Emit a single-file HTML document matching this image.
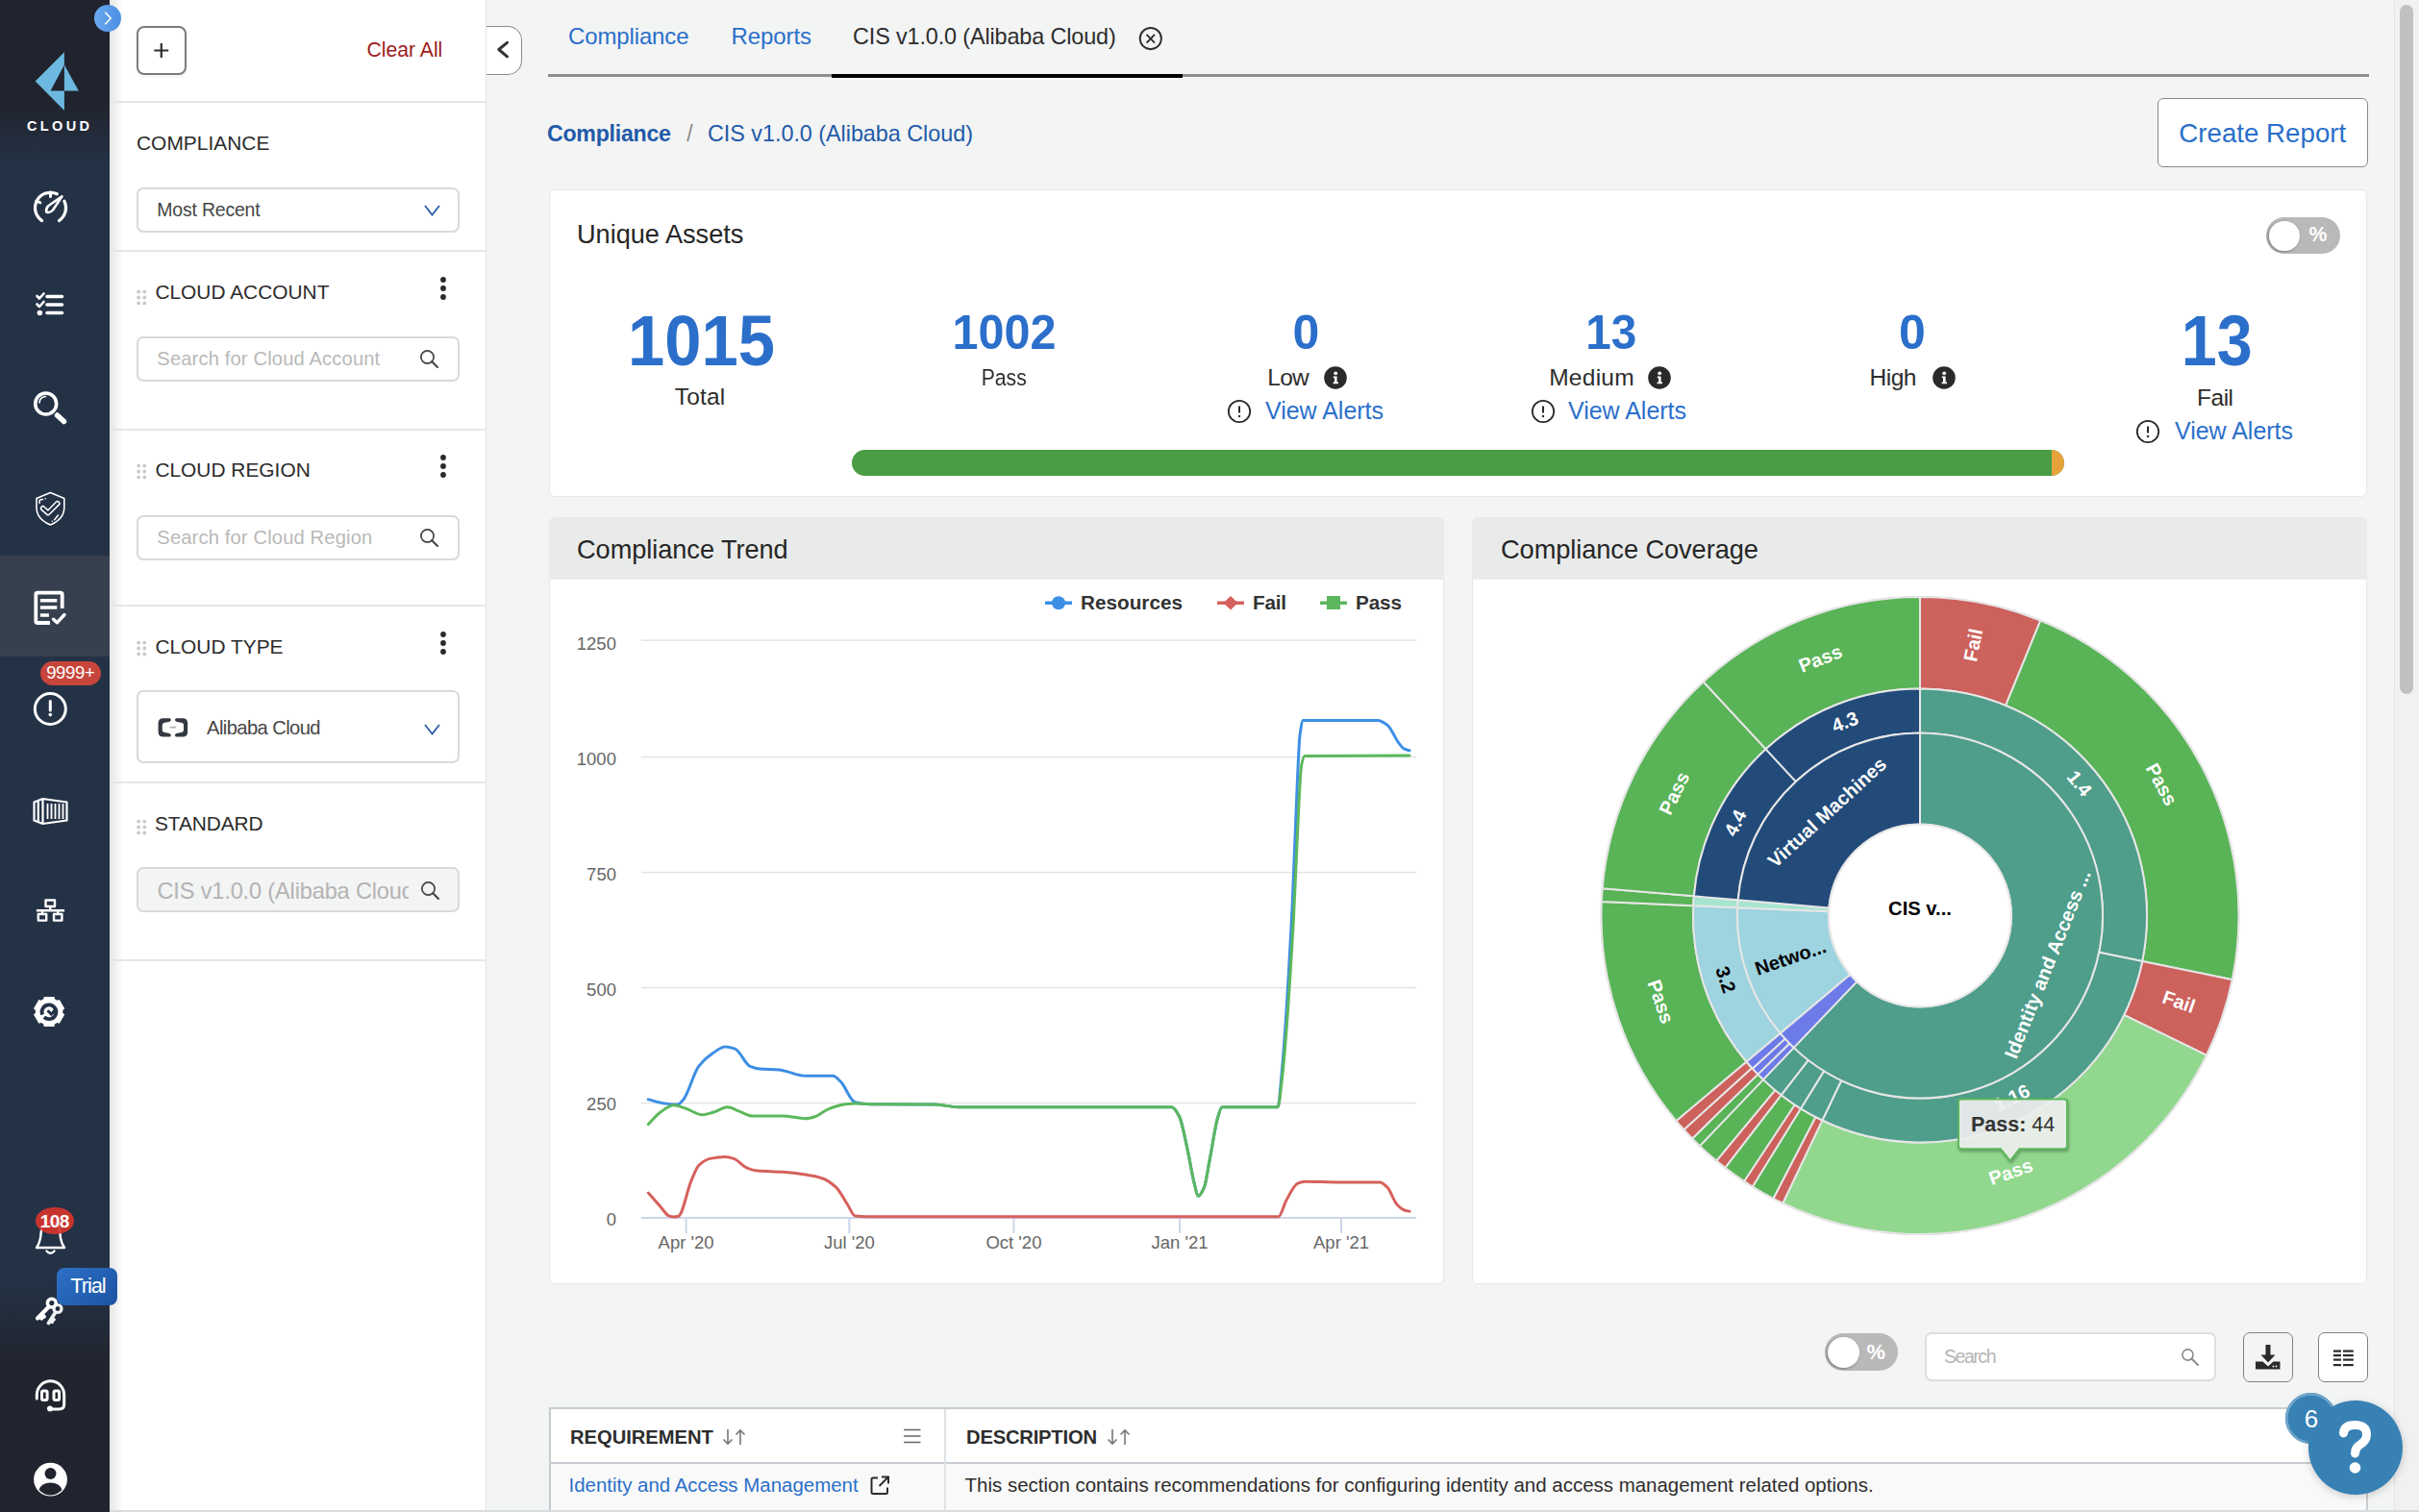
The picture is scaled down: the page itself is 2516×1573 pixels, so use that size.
<!DOCTYPE html>
<html><head><meta charset="utf-8"><style>
html,body{margin:0;padding:0;}
body{width:2516px;height:1573px;position:relative;overflow:hidden;background:#f3f4f4;font-family:"Liberation Sans",sans-serif;}
.b{position:absolute;}
.t{position:absolute;white-space:nowrap;line-height:1;}
</style></head><body>
<div class="b" style="left:0;top:0;width:114px;height:1573px;background:linear-gradient(180deg,#21242e 0px,#21242e 108px,#243246 172px,#243246 1330px,#21252f 1415px,#21242e 1573px);"></div>
<div class="b" style="left:0px;top:578px;width:114px;height:105px;background:#36404f;"></div>
<svg class="b" style="left:0;top:0" width="114" height="150" viewBox="0 0 114 150">
<path d="M66.9 54.2 L36.7 84.4 L66.9 115 Z M66.9 67.4 L52.6 94.5 L66.9 94.5 Z" fill="#6cb8e0" fill-rule="evenodd"/>
<path d="M66.9 67.4 L81.8 94.5 L66.9 94.5 Z" fill="#6cb8e0"/>
</svg>
<div class="t" style="left:28.0px;top:124.4px;font-size:14.5px;color:#fff;font-weight:bold;letter-spacing:3.36px;">CLOUD</div>
<svg class="b" style="left:0;top:0" width="114" height="1573" viewBox="0 0 114 1573">
<g fill="none" stroke="#fff" stroke-linecap="round" stroke-linejoin="round">
 <!-- speedometer -->
 <path d="M43.55 229.56 A16 16 0 0 1 59.26 201.80 M66.88 209.29 A16 16 0 0 1 61.45 229.56" stroke-width="3.2"/>
 <path d="M52.5 200 L52.5 204.5 M37.8 209 L41.8 210.8" stroke-width="3"/>
 <path d="M48.2 220.5 Q47.5 216.5 50.5 214 L64.5 204.3 L55 218.5 Q52 222 48.2 220.5 Z" stroke-width="2.6"/>
 <!-- list -->
 <path d="M38.5 308 L41 310.5 L45.5 305.5 M38.5 316.5 L41 319 L45.5 314" stroke-width="2.6"/>
 <path d="M49 308.5 L64.5 308.5 M49 317 L64.5 317 M49 325.5 L64.5 325.5" stroke-width="3.6"/>
 <circle cx="41.4" cy="325.5" r="1.4" stroke-width="2.8"/>
 <!-- search -->
 <circle cx="47.7" cy="420" r="11" stroke-width="3.6"/>
 <path d="M41 419 A6.5 6.5 0 0 1 47.5 412.5" stroke-width="1.6"/>
 <path d="M59.5 432 L66.5 438.5" stroke-width="5.5"/>
 <!-- shield -->
 <path d="M52.4 512.6 L66.8 518.6 L66.8 528.5 C66.5 536.5 61 542.5 52.4 546 C43.8 542.5 38.3 536.5 38 528.5 L38 518.6 Z" stroke-width="1.6"/>
 <path d="M41.1 523.6 L41.1 520.9 Q41.1 520.2 41.8 520.1 L44.4 519.6 M47.2 518.8 L47.4 518.8" stroke-width="1.5"/>
 <path d="M56.6 540.8 L60.5 536 M54.3 542.3 L54.3 542.3" stroke-width="1.5"/>
 <path d="M44.6 528.8 L50 533.6 L59.8 523.7" stroke-width="5.6"/>
 <path d="M44.6 528.8 L50 533.6 L59.8 523.7" stroke-width="2.6" stroke="#243246"/>
 <!-- report -->
 <path d="M52 648 L39 648 Q37.3 648 37.3 646.3 L37.3 618.3 Q37.3 616.6 39 616.6 L63 616.6 Q64.7 616.6 64.7 618.3 L64.7 633" stroke-width="3.8" stroke-linecap="butt"/>
 <path d="M41.9 624.7 L59.3 624.7 M41.9 632 L59.3 632 M41.9 640 L50.9 640" stroke-width="3.4" stroke-linecap="butt"/>
 <path d="M55.6 644.2 L59.3 647.8 L67 639.5" stroke-width="3.4"/>
 <!-- alert circle -->
 <circle cx="52.3" cy="737.5" r="16" stroke-width="3"/>
 <path d="M52.3 729.5 L52.3 739" stroke-width="3"/>
</g>
<circle cx="52.3" cy="743.6" r="1.8" fill="#fff"/>
<!-- search glint inside ring fill fix -->
<g fill="none" stroke="#fff" stroke-width="2.2" stroke-linejoin="round">
 <!-- container -->
 <path d="M35.5 834.5 L44.5 831 L69.5 834.5 L69.5 853.5 L44.5 857 L35.5 853.5 Z"/>
 <path d="M44.5 831 L44.5 857 M39.8 834 L39.8 854.5"/>
 <path d="M49.5 836 L49.5 852 M53.5 836 L53.5 852 M57.5 836 L57.5 852 M61.5 836 L61.5 852 M65.5 836 L65.5 852" stroke-width="1.8"/>
 <!-- network -->
 <rect x="47.5" y="936.5" width="9.5" height="6.5" stroke-width="2.4"/>
 <path d="M52.3 943 L52.3 947.2 M37.9 947.2 L67.1 947.2 M44 947.2 L44 950 M60.2 947.2 L60.2 950" stroke-width="2.4"/>
 <rect x="39.8" y="951" width="8.4" height="6.6" stroke-width="2.4"/>
 <rect x="56" y="951" width="8.4" height="6.6" stroke-width="2.4"/>
</g>
<!-- gear -->
<g transform="translate(51.1 1052.4)">
 <path fill="#fff" d="M-5.85 -13.05 L-5.34 -15.51 L5.34 -15.51 L5.85 -13.05 L8.37 -11.59 L10.76 -12.38 L16.10 -3.13 L14.23 -1.46 L14.23 1.46 L16.10 3.13 L10.76 12.38 L8.37 11.59 L5.85 13.05 L5.34 15.51 L-5.34 15.51 L-5.85 13.05 L-8.37 11.59 L-10.76 12.38 L-16.10 3.13 L-14.23 1.46 L-14.23 -1.46 L-16.10 -3.13 L-10.76 -12.38 L-8.37 -11.59 Z"/>
 <path d="M-5.2 5.8 A7.4 7.4 0 1 0 -7 3.2" stroke="#243246" stroke-width="3.8" fill="none"/>
 <path d="M-1.6 -1.2 L2.2 2.6 L6.5 -1.8" stroke="#243246" stroke-width="3" fill="none"/>
</g>
<g fill="none" stroke="#fff" stroke-linecap="round" stroke-linejoin="round">
 <!-- bell -->
 <path d="M38 1298 L67 1298 Q64 1294 63 1288 L62 1280 Q61 1272 52.5 1271 Q44 1272 43 1280 L42 1288 Q41 1294 38 1298 Z" stroke-width="2.4"/>
 <path d="M48.5 1301.5 Q52.5 1306 56.5 1301.5" stroke-width="2.4"/>
 <!-- headset -->
 <path d="M38.3 1455 L38.3 1451 A14.2 14.2 0 0 1 66.7 1451 L66.7 1461 Q66.7 1466 61.5 1466 L55 1466" stroke-width="3"/>
 <rect x="43.5" y="1447" width="5.6" height="9.5" rx="1.5" stroke-width="3"/>
 <rect x="56" y="1447" width="5.6" height="9.5" rx="1.5" stroke-width="3"/>
</g>
<circle cx="52" cy="1465.5" r="3" fill="#fff"/>
<!-- key -->
<g fill="none" stroke="#fff" stroke-linecap="round" stroke-linejoin="round">
 <circle cx="60" cy="1361.5" r="4" stroke-width="3.2" stroke="#eef0f2"/>
 <path d="M57.2 1366 L50.5 1376.5 M53.8 1371.5 L56 1372.8 M52.2 1374 L54.2 1375.2" stroke-width="3.8" stroke="#eef0f2"/>
 <circle cx="53.8" cy="1355.6" r="4.4" stroke-width="3.6"/>
 <path d="M50.8 1359.6 L39 1371.5 M43.5 1367.5 L45.8 1369.8 M41.3 1369.6 L43.3 1371.6" stroke-width="4.2"/>
</g>
<!-- user -->
<circle cx="52.5" cy="1539.2" r="17.4" fill="#fff"/>
<circle cx="52.5" cy="1533" r="6" fill="#21242e"/>
<path d="M40.5 1550 Q43 1542.5 52.5 1542.5 Q62 1542.5 64.5 1550 Q59 1555.5 52.5 1555.5 Q46 1555.5 40.5 1550 Z" fill="#21242e"/>
</svg>
<div class="b" style="left:114px;top:0px;width:392px;height:1573px;background:#fff;border-right:1px solid #e2e4e4;box-sizing:border-box;"></div>
<div class="b" style="left:114px;top:0px;width:14px;height:1573px;background:linear-gradient(90deg,rgba(0,0,0,0.10),rgba(0,0,0,0));"></div>
<div class="b" style="left:142px;top:27px;width:51.5px;height:51px;border:2px solid #7b7b7b;border-radius:8px;box-sizing:border-box;box-shadow:0 2px 3px rgba(0,0,0,0.06);"></div>
<svg class="b" style="left:142px;top:27px" width="52" height="52"><path d="M25.8 18 L25.8 33 M18.4 25.5 L33.2 25.5" stroke="#2c2c2c" stroke-width="2.2"/></svg>
<div class="t" style="left:381.6px;top:41.0px;font-size:21.2px;color:#9c1b1b;letter-spacing:-0.02px;">Clear All</div>
<div class="b" style="left:114px;top:104.5px;width:391px;height:2.0px;background:#e6e6e6;"></div>
<div class="t" style="left:142.0px;top:138.5px;font-size:20.9px;color:#2b2b2b;letter-spacing:0.02px;">COMPLIANCE</div>
<div class="b" style="left:142.2px;top:194.5px;width:336.0px;height:47.5px;border:2px solid #d9d9d9;border-radius:7px;box-sizing:border-box;background:#fff;"></div>
<div class="t" style="left:163.3px;top:208.6px;font-size:19.5px;color:#464646;letter-spacing:-0.21px;">Most Recent</div>
<svg class="b" style="left:440.5px;top:212.5px" width="18" height="12"><path d="M1 1 L8.5 10.5 L16 1" stroke="#2a5ca8" stroke-width="1.8" fill="none"/></svg>
<div class="b" style="left:114px;top:260px;width:391px;height:2px;background:#e6e6e6;"></div>
<svg class="b" style="left:142px;top:301.5px" width="12" height="16"><circle cx="2.2" cy="1.6" r="1.9" fill="#c9c9c9"/><circle cx="8.3" cy="1.6" r="1.9" fill="#c9c9c9"/><circle cx="2.2" cy="7.5" r="1.9" fill="#c9c9c9"/><circle cx="8.3" cy="7.5" r="1.9" fill="#c9c9c9"/><circle cx="2.2" cy="13.4" r="1.9" fill="#c9c9c9"/><circle cx="8.3" cy="13.4" r="1.9" fill="#c9c9c9"/></svg>
<div class="t" style="left:161.4px;top:294.2px;font-size:20.9px;color:#2b2b2b;letter-spacing:0.00px;">CLOUD ACCOUNT</div>
<svg class="b" style="left:456.1px;top:285.3px" width="10" height="30"><circle cx="5" cy="6.0" r="2.9" fill="#2a2a2a"/><circle cx="5" cy="15.0" r="2.9" fill="#2a2a2a"/><circle cx="5" cy="24.0" r="2.9" fill="#2a2a2a"/></svg>
<div class="b" style="left:142.2px;top:350px;width:336.0px;height:47.19999999999999px;border:2px solid #d9d9d9;border-radius:7px;box-sizing:border-box;background:#fff;"></div>
<div class="t" style="left:163.3px;top:363.3px;font-size:20.2px;color:#b9b9b9;letter-spacing:0.13px;">Search for Cloud Account</div>
<svg class="b" style="left:434px;top:360.5px" width="26" height="26"><circle cx="10.5" cy="10.5" r="6.6" stroke="#444" stroke-width="1.7" fill="none"/><path d="M15.3 15.3 L21.0 21.0" stroke="#444" stroke-width="2.1" stroke-linecap="round"/></svg>
<div class="b" style="left:114px;top:445.5px;width:391px;height:2.0px;background:#e6e6e6;"></div>
<svg class="b" style="left:142px;top:482.5px" width="12" height="16"><circle cx="2.2" cy="1.6" r="1.9" fill="#c9c9c9"/><circle cx="8.3" cy="1.6" r="1.9" fill="#c9c9c9"/><circle cx="2.2" cy="7.5" r="1.9" fill="#c9c9c9"/><circle cx="8.3" cy="7.5" r="1.9" fill="#c9c9c9"/><circle cx="2.2" cy="13.4" r="1.9" fill="#c9c9c9"/><circle cx="8.3" cy="13.4" r="1.9" fill="#c9c9c9"/></svg>
<div class="t" style="left:161.4px;top:479.3px;font-size:20.9px;color:#2b2b2b;letter-spacing:0.00px;">CLOUD REGION</div>
<svg class="b" style="left:456.1px;top:470.3px" width="10" height="30"><circle cx="5" cy="6.0" r="2.9" fill="#2a2a2a"/><circle cx="5" cy="15.0" r="2.9" fill="#2a2a2a"/><circle cx="5" cy="24.0" r="2.9" fill="#2a2a2a"/></svg>
<div class="b" style="left:142.2px;top:535.6px;width:336.0px;height:47.39999999999998px;border:2px solid #d9d9d9;border-radius:7px;box-sizing:border-box;background:#fff;"></div>
<div class="t" style="left:163.3px;top:548.9px;font-size:20.2px;color:#b9b9b9;letter-spacing:0.13px;">Search for Cloud Region</div>
<svg class="b" style="left:434px;top:546.5px" width="26" height="26"><circle cx="10.5" cy="10.5" r="6.6" stroke="#444" stroke-width="1.7" fill="none"/><path d="M15.3 15.3 L21.0 21.0" stroke="#444" stroke-width="2.1" stroke-linecap="round"/></svg>
<div class="b" style="left:114px;top:628.5px;width:391px;height:2.0px;background:#e6e6e6;"></div>
<svg class="b" style="left:142px;top:666.5px" width="12" height="16"><circle cx="2.2" cy="1.6" r="1.9" fill="#c9c9c9"/><circle cx="8.3" cy="1.6" r="1.9" fill="#c9c9c9"/><circle cx="2.2" cy="7.5" r="1.9" fill="#c9c9c9"/><circle cx="8.3" cy="7.5" r="1.9" fill="#c9c9c9"/><circle cx="2.2" cy="13.4" r="1.9" fill="#c9c9c9"/><circle cx="8.3" cy="13.4" r="1.9" fill="#c9c9c9"/></svg>
<div class="t" style="left:161.4px;top:663.2px;font-size:20.9px;color:#2b2b2b;letter-spacing:0.00px;">CLOUD TYPE</div>
<svg class="b" style="left:456.1px;top:654.3px" width="10" height="30"><circle cx="5" cy="6.0" r="2.9" fill="#2a2a2a"/><circle cx="5" cy="15.0" r="2.9" fill="#2a2a2a"/><circle cx="5" cy="24.0" r="2.9" fill="#2a2a2a"/></svg>
<div class="b" style="left:142.2px;top:718px;width:336.0px;height:76.20000000000005px;border:2px solid #d9d9d9;border-radius:7px;box-sizing:border-box;background:#fff;"></div>
<svg class="b" style="left:0;top:0" width="220" height="800"><path d="M176.3 747.2 L169.9 747.2 Q164.6 747.2 164.6 752.5 L164.6 761.2 Q164.6 766.5 169.9 766.5 L176.3 766.5 Q177.8 766.5 177.8 765 Q177.8 763.3 176.3 763 L170.5 761.7 Q168.8 761.3 168.8 759.6 L168.8 754.1 Q168.8 752.4 170.5 752 L176.3 750.7 Q177.8 750.4 177.8 748.7 Q177.8 747.2 176.3 747.2 Z M 183.5 747.2 L 189.9 747.2 Q 195.2 747.2 195.2 752.5 L 195.2 761.2 Q 195.2 766.5 189.9 766.5 L 183.5 766.5 Q 182.0 766.5 182.0 765.0 Q 182.0 763.3 183.5 763.0 L 189.3 761.7 Q 191.0 761.3 191.0 759.6 L 191.0 754.1 Q 191.0 752.4 189.3 752.0 L 183.5 750.7 Q 182.0 750.4 182.0 748.7 Q 182.0 747.2 183.5 747.2 Z" fill="#343840"/><path d="M177.5 756.7 L182.3 756.7" stroke="#b5b5b5" stroke-width="1.8" stroke-linecap="round"/></svg>
<div class="t" style="left:215.1px;top:746.5px;font-size:20.2px;color:#464646;letter-spacing:-0.60px;">Alibaba Cloud</div>
<svg class="b" style="left:440.5px;top:753px" width="18" height="12"><path d="M1 1 L8.5 10.5 L16 1" stroke="#2a5ca8" stroke-width="1.8" fill="none"/></svg>
<div class="b" style="left:114px;top:812.5px;width:391px;height:2.0px;background:#e6e6e6;"></div>
<svg class="b" style="left:142px;top:853px" width="12" height="16"><circle cx="2.2" cy="1.6" r="1.9" fill="#c9c9c9"/><circle cx="8.3" cy="1.6" r="1.9" fill="#c9c9c9"/><circle cx="2.2" cy="7.5" r="1.9" fill="#c9c9c9"/><circle cx="8.3" cy="7.5" r="1.9" fill="#c9c9c9"/><circle cx="2.2" cy="13.4" r="1.9" fill="#c9c9c9"/><circle cx="8.3" cy="13.4" r="1.9" fill="#c9c9c9"/></svg>
<div class="t" style="left:161.0px;top:846.8px;font-size:20.9px;color:#2b2b2b;letter-spacing:-0.12px;">STANDARD</div>
<div class="b" style="left:142.2px;top:902px;width:336.0px;height:47.299999999999955px;border:2px solid #d9d9d9;border-radius:7px;box-sizing:border-box;background:#f3f4f4;"></div>
<div class="b" style="left:163.5px;top:908px;width:261.5px;height:40px;overflow:hidden;">
<div class="t" style="left:0.0px;top:7.9px;font-size:23.6px;color:#b3b3b3;letter-spacing:-0.17px;">CIS v1.0.0 (Alibaba Cloud)</div>
</div>
<svg class="b" style="left:434.5px;top:914px" width="26" height="26"><circle cx="10.5" cy="10.5" r="6.6" stroke="#444" stroke-width="1.7" fill="none"/><path d="M15.3 15.3 L21.0 21.0" stroke="#444" stroke-width="2.1" stroke-linecap="round"/></svg>
<div class="b" style="left:114px;top:997.5px;width:391px;height:2.0px;background:#e6e6e6;"></div>
<div class="b" style="left:506px;top:0px;width:1984px;height:1573px;background:#f3f4f4;"></div>
<div class="b" style="left:506px;top:26.5px;width:37px;height:51.5px;background:#fff;border:1.6px solid #8a8a8a;border-left:none;border-radius:0 15px 15px 0;box-sizing:border-box;"></div>
<svg class="b" style="left:506px;top:26px" width="37" height="52"><path d="M21.5 18.3 L12.8 25.5 L21.5 32.9" stroke="#333" stroke-width="3" fill="none" stroke-linecap="round" stroke-linejoin="round"/></svg>
<div class="b" style="left:569.5px;top:77px;width:1894.5px;height:3px;background:#8e8e8e;"></div>
<div class="b" style="left:865px;top:76.5px;width:365px;height:4.0px;background:#000;"></div>
<div class="t" style="left:591.0px;top:26.2px;font-size:24px;color:#2a6fca;letter-spacing:-0.13px;">Compliance</div>
<div class="t" style="left:760.5px;top:26.2px;font-size:24px;color:#2a6fca;letter-spacing:-0.09px;">Reports</div>
<div class="t" style="left:887.0px;top:26.5px;font-size:23.4px;color:#2d2d2d;letter-spacing:-0.13px;">CIS v1.0.0 (Alibaba Cloud)</div>
<svg class="b" style="left:1182px;top:26px" width="30" height="30"><circle cx="14.8" cy="14.1" r="11.1" stroke="#2d2d2d" stroke-width="1.9" fill="none"/><path d="M10.6 9.9 L19 18.6 M19 9.9 L10.6 18.6" stroke="#2d2d2d" stroke-width="1.9"/></svg>
<div class="t" style="left:569.0px;top:127.6px;font-size:23.2px;color:#1f5aa8;font-weight:bold;letter-spacing:-0.28px;">Compliance</div>
<div class="t" style="left:714.3px;top:127.7px;font-size:23px;color:#8a8a8a;">/</div>
<div class="t" style="left:736.0px;top:127.5px;font-size:23.4px;color:#1f5aa8;letter-spacing:-0.04px;">CIS v1.0.0 (Alibaba Cloud)</div>
<div class="b" style="left:2244px;top:102px;width:219px;height:72px;background:#fff;border:1.8px solid #8a8a8a;border-radius:6px;box-sizing:border-box;"></div>
<div class="t" style="left:2266.3px;top:124.6px;font-size:27.7px;color:#2a6fca;letter-spacing:0.00px;">Create Report</div>
<div class="b" style="left:571px;top:197px;width:1891px;height:319.5px;background:#fff;border:1.5px solid #e6e8e8;border-radius:6px;box-sizing:border-box;"></div>
<div class="t" style="left:600.0px;top:230.3px;font-size:27.2px;color:#262626;letter-spacing:-0.04px;">Unique Assets</div>
<div class="b" style="left:2357px;top:226px;width:77px;height:38px;border-radius:19.0px;background:#b9b9b9;"></div>
<div class="b" style="left:2360px;top:229.5px;width:31.5px;height:31.5px;border-radius:50%;background:#fff;box-shadow:-1px 1px 3px rgba(0,0,0,0.35);"></div>
<div class="t" style="left:2401.4px;top:234.3px;font-size:21.28px;color:#fff;font-weight:bold;">%</div>
<div class="t" style="left:646.1px;top:316.8px;font-size:75px;color:#2b6fca;font-weight:bold;transform:scaleX(0.9170);transform-origin:83.4px 0;">1015</div>
<div class="t" style="left:701.8px;top:401.2px;font-size:24.5px;color:#2d2d2d;letter-spacing:0.19px;">Total</div>
<div class="t" style="left:989.4px;top:320.6px;font-size:50px;color:#2b6fca;font-weight:bold;transform:scaleX(0.9710);transform-origin:55.6px 0;">1002</div>
<div class="t" style="left:1016.8px;top:380.7px;font-size:24.5px;color:#2d2d2d;transform:scaleX(0.8629);transform-origin:27.2px 0;">Pass</div>
<div class="t" style="left:1344.6px;top:320.6px;font-size:50px;color:#2b6fca;font-weight:bold;">0</div>
<div class="t" style="left:1318.2px;top:380.7px;font-size:24.5px;color:#2d2d2d;letter-spacing:-0.67px;">Low</div>
<div class="t" style="left:1647.7px;top:320.6px;font-size:50px;color:#2b6fca;font-weight:bold;transform:scaleX(0.9530);transform-origin:27.8px 0;">13</div>
<div class="t" style="left:1611.2px;top:380.7px;font-size:24.5px;color:#2d2d2d;letter-spacing:0.27px;">Medium</div>
<div class="t" style="left:1975.1px;top:320.6px;font-size:50px;color:#2b6fca;font-weight:bold;">0</div>
<div class="t" style="left:1944.6px;top:380.7px;font-size:24.5px;color:#2d2d2d;letter-spacing:-0.50px;">High</div>
<div class="t" style="left:2264.3px;top:316.8px;font-size:75px;color:#2b6fca;font-weight:bold;transform:scaleX(0.8870);transform-origin:41.7px 0;">13</div>
<div class="t" style="left:2285.1px;top:401.7px;font-size:24.5px;color:#2d2d2d;letter-spacing:-0.53px;">Fail</div>
<svg class="b" style="left:1376px;top:380px" width="26" height="26"><circle cx="13" cy="13" r="11.8" fill="#2a2a2a"/><circle cx="13.2" cy="8.3" r="1.9" fill="#fff"/><path d="M10.8 11.6 L14.6 11.6 L14.6 17.6 L16 17.6 L16 19.2 L10.6 19.2 L10.6 17.6 L12 17.6 L12 13.2 L10.8 13.2 Z" fill="#fff"/></svg>
<svg class="b" style="left:1713px;top:380px" width="26" height="26"><circle cx="13" cy="13" r="11.8" fill="#2a2a2a"/><circle cx="13.2" cy="8.3" r="1.9" fill="#fff"/><path d="M10.8 11.6 L14.6 11.6 L14.6 17.6 L16 17.6 L16 19.2 L10.6 19.2 L10.6 17.6 L12 17.6 L12 13.2 L10.8 13.2 Z" fill="#fff"/></svg>
<svg class="b" style="left:2008.5px;top:380px" width="26" height="26"><circle cx="13" cy="13" r="11.8" fill="#2a2a2a"/><circle cx="13.2" cy="8.3" r="1.9" fill="#fff"/><path d="M10.8 11.6 L14.6 11.6 L14.6 17.6 L16 17.6 L16 19.2 L10.6 19.2 L10.6 17.6 L12 17.6 L12 13.2 L10.8 13.2 Z" fill="#fff"/></svg>
<svg class="b" style="left:1276px;top:415px" width="26" height="26"><circle cx="13" cy="13" r="11.2" stroke="#2a2a2a" stroke-width="1.8" fill="none"/><path d="M13 7.5 L13 14.5" stroke="#2a2a2a" stroke-width="2"/><circle cx="13" cy="18" r="1.2" fill="#2a2a2a"/></svg>
<div class="t" style="left:1316.0px;top:415.4px;font-size:25px;color:#2b6fca;letter-spacing:-0.02px;">View Alerts</div>
<svg class="b" style="left:1592px;top:415px" width="26" height="26"><circle cx="13" cy="13" r="11.2" stroke="#2a2a2a" stroke-width="1.8" fill="none"/><path d="M13 7.5 L13 14.5" stroke="#2a2a2a" stroke-width="2"/><circle cx="13" cy="18" r="1.2" fill="#2a2a2a"/></svg>
<div class="t" style="left:1631.0px;top:415.4px;font-size:25px;color:#2b6fca;letter-spacing:-0.02px;">View Alerts</div>
<svg class="b" style="left:2221px;top:436px" width="26" height="26"><circle cx="13" cy="13" r="11.2" stroke="#2a2a2a" stroke-width="1.8" fill="none"/><path d="M13 7.5 L13 14.5" stroke="#2a2a2a" stroke-width="2"/><circle cx="13" cy="18" r="1.2" fill="#2a2a2a"/></svg>
<div class="t" style="left:2262.0px;top:436.4px;font-size:25px;color:#2b6fca;letter-spacing:-0.02px;">View Alerts</div>
<div class="b" style="left:886px;top:467.5px;width:1261px;height:27px;border-radius:13.5px;background:#4a9c45;overflow:hidden;"><div style="position:absolute;left:1248px;top:0;width:20px;height:27px;background:#e8a23c;"></div></div>
<div class="b" style="left:571px;top:538px;width:931px;height:798px;background:#fff;border:1.5px solid #e6e8e8;border-radius:6px;box-sizing:border-box;overflow:hidden;"></div>
<div class="b" style="left:571px;top:538px;width:931px;height:65px;background:#e9ebea;border-radius:6px 6px 0 0;"></div>
<div class="t" style="left:600.0px;top:558.3px;font-size:27.2px;color:#262626;letter-spacing:-0.06px;">Compliance Trend</div>
<svg class="b" style="left:0;top:0" width="2516" height="1573"><rect x="667" y="665.4" width="806" height="1.4" fill="#e3e3e3"/><rect x="667" y="786.9" width="806" height="1.4" fill="#e3e3e3"/><rect x="667" y="906.9" width="806" height="1.4" fill="#e3e3e3"/><rect x="667" y="1026.9" width="806" height="1.4" fill="#e3e3e3"/><rect x="667" y="1146.9" width="806" height="1.4" fill="#e3e3e3"/><rect x="667" y="1266" width="806" height="2" fill="#ccd6eb"/><rect x="712.6" y="1267" width="2" height="16" fill="#ccd6eb"/><rect x="882.4" y="1267" width="2" height="16" fill="#ccd6eb"/><rect x="1053.4" y="1267" width="2" height="16" fill="#ccd6eb"/><rect x="1226" y="1267" width="2" height="16" fill="#ccd6eb"/><rect x="1394" y="1267" width="2" height="16" fill="#ccd6eb"/></svg>
<div class="t" style="left:599.8px;top:660.7px;font-size:18.5px;color:#666;">1250</div>
<div class="t" style="left:599.8px;top:781.2px;font-size:18.5px;color:#666;">1000</div>
<div class="t" style="left:610.1px;top:900.7px;font-size:18.5px;color:#666;">750</div>
<div class="t" style="left:610.1px;top:1020.7px;font-size:18.5px;color:#666;">500</div>
<div class="t" style="left:610.1px;top:1140.2px;font-size:18.5px;color:#666;">250</div>
<div class="t" style="left:630.7px;top:1260.2px;font-size:18.5px;color:#666;">0</div>
<div class="t" style="left:684.6px;top:1284.2px;font-size:18.5px;color:#666;">Apr '20</div>
<div class="t" style="left:857.0px;top:1284.2px;font-size:18.5px;color:#666;">Jul '20</div>
<div class="t" style="left:1025.4px;top:1284.2px;font-size:18.5px;color:#666;">Oct '20</div>
<div class="t" style="left:1197.5px;top:1284.2px;font-size:18.5px;color:#666;">Jan '21</div>
<div class="t" style="left:1366.0px;top:1284.2px;font-size:18.5px;color:#666;">Apr '21</div>
<svg class="b" style="left:0;top:0" width="2516" height="1573"><rect x="1087" y="625.5" width="28" height="3.5" fill="#3d8ee5"/><circle cx="1101" cy="627.2" r="7" fill="#3d8ee5"/><rect x="1266" y="625.5" width="28" height="3.5" fill="#d6605b"/><path d="M1280 620 L1287.5 627.2 L1280 634.4 L1272.5 627.2 Z" fill="#d6605b"/><rect x="1373" y="625.5" width="28" height="3.5" fill="#5cb85c"/><rect x="1380" y="620" width="14" height="14" fill="#5cb85c"/></svg>
<div class="t" style="left:1124.0px;top:616.6px;font-size:20.7px;color:#333;font-weight:bold;letter-spacing:0.02px;">Resources</div>
<div class="t" style="left:1303.0px;top:616.6px;font-size:20.7px;color:#333;font-weight:bold;letter-spacing:-0.22px;">Fail</div>
<div class="t" style="left:1410.0px;top:616.6px;font-size:20.7px;color:#333;font-weight:bold;letter-spacing:-0.11px;">Pass</div>
<svg class="b" style="left:0;top:0" width="2516" height="1573" fill="none" stroke-linecap="round" stroke-linejoin="round"><path d="M674.3 1143.9 C679.8 1145.2 685.4 1147.2 691.0 1147.9 C695.6 1148.4 700.2 1149.0 704.8 1149.0 C706.8 1149.0 708.8 1146.2 710.8 1143.9 C716.1 1137.7 721.4 1116.3 726.7 1109.4 C731.3 1103.3 735.9 1099.4 740.6 1096.3 C745.2 1093.2 749.8 1089.1 754.4 1089.1 C757.8 1089.1 761.1 1090.0 764.4 1091.1 C769.7 1092.8 774.9 1107.1 780.2 1109.4 C783.5 1110.8 786.9 1111.9 790.2 1112.1 C796.8 1112.6 803.4 1112.5 810.0 1112.9 C819.3 1113.5 828.5 1119.3 837.8 1119.3 C847.3 1119.3 856.8 1119.3 866.3 1119.3 C869.0 1119.3 871.6 1122.7 874.3 1125.2 C879.3 1130.0 884.3 1145.5 889.4 1146.7 C894.7 1147.9 899.9 1148.6 905.2 1148.7 C927.7 1149.0 950.2 1148.8 972.7 1149.0 C980.6 1149.2 988.6 1151.8 996.5 1151.8 C1070.6 1151.8 1144.7 1151.8 1218.7 1151.8 C1221.4 1151.8 1224.0 1156.7 1226.7 1161.7 C1229.3 1166.8 1232.0 1181.7 1234.6 1193.5 C1237.0 1204.1 1239.4 1220.1 1241.7 1229.2 C1243.3 1235.3 1244.9 1244.3 1246.5 1244.3 C1248.5 1244.3 1250.5 1239.8 1252.5 1235.2 C1254.4 1230.5 1256.4 1215.5 1258.4 1205.4 C1261.1 1191.9 1263.7 1172.4 1266.3 1163.7 C1267.9 1158.5 1269.5 1151.8 1271.1 1151.8 C1290.4 1151.8 1309.7 1151.8 1329.0 1151.8 C1330.4 1151.8 1331.7 1132.0 1333.0 1118.0 C1336.7 1079.2 1340.3 1017.0 1344.0 945.0 C1345.8 909.0 1347.7 847.4 1349.5 810.0 C1350.3 793.0 1351.2 771.1 1352.0 765.0 C1353.2 756.4 1354.3 749.5 1355.5 749.5 C1365.5 749.4 1375.4 749.4 1385.4 749.4 C1401.3 749.4 1417.1 749.4 1433.0 749.4 C1436.3 749.4 1439.6 751.8 1442.9 754.2 C1446.9 757.1 1450.9 767.9 1454.8 772.9 C1456.8 775.3 1458.8 778.3 1460.8 779.2 C1462.5 780.0 1464.2 780.3 1466.0 780.8" stroke="#3d8ee5" stroke-width="3"/><path d="M674.3 1241.1 C678.5 1245.9 682.8 1250.7 687.0 1255.4 C689.9 1258.6 692.8 1263.9 695.7 1264.9 C697.4 1265.5 699.2 1266.1 700.9 1266.1 C702.5 1266.1 704.0 1265.8 705.6 1265.3 C710.0 1264.1 714.4 1239.5 718.7 1229.2 C721.4 1223.0 724.0 1215.1 726.7 1212.5 C730.6 1208.7 734.6 1206.2 738.6 1205.4 C743.9 1204.3 749.2 1203.4 754.4 1203.4 C757.4 1203.4 760.3 1204.4 763.2 1205.4 C767.9 1207.0 772.7 1213.6 777.5 1215.3 C781.0 1216.6 784.6 1217.8 788.2 1218.1 C796.8 1218.8 805.4 1218.7 814.0 1219.3 C821.9 1219.8 829.8 1220.8 837.8 1222.1 C843.7 1223.0 849.7 1224.0 855.6 1226.0 C860.3 1227.6 864.9 1230.9 869.5 1235.2 C873.5 1238.8 877.5 1247.1 881.4 1253.0 C884.1 1257.0 886.7 1264.6 889.4 1264.9 C893.3 1265.5 897.3 1265.7 901.3 1265.7 C1044.1 1265.7 1187.0 1265.7 1329.8 1265.7 C1332.5 1265.7 1335.1 1253.7 1337.8 1249.0 C1341.7 1242.0 1345.7 1232.8 1349.7 1231.2 C1352.3 1230.1 1355.0 1229.2 1357.6 1229.2 C1369.5 1229.2 1381.4 1230.0 1393.3 1230.0 C1407.2 1230.0 1421.1 1230.0 1435.0 1230.0 C1437.6 1230.0 1440.3 1232.7 1442.9 1235.2 C1446.2 1238.3 1449.6 1249.6 1452.9 1253.0 C1455.5 1255.8 1458.1 1258.1 1460.8 1259.0 C1462.5 1259.6 1464.2 1259.8 1466.0 1260.2" stroke="#d6605b" stroke-width="3"/><path d="M674.3 1169.7 C678.5 1165.4 682.8 1159.9 687.0 1157.0 C691.6 1153.8 696.2 1149.8 700.9 1149.8 C704.8 1149.8 708.8 1151.8 712.8 1153.0 C718.7 1154.9 724.7 1159.8 730.6 1159.8 C734.6 1159.8 738.6 1158.1 742.5 1157.0 C747.2 1155.7 751.8 1151.8 756.4 1151.8 C760.4 1151.8 764.4 1154.4 768.3 1155.8 C773.0 1157.4 777.6 1161.0 782.2 1161.0 C792.8 1161.0 803.4 1161.0 814.0 1161.0 C821.9 1161.0 829.8 1163.7 837.8 1163.7 C841.1 1163.7 844.4 1162.7 847.7 1161.7 C852.3 1160.4 857.0 1155.6 861.6 1153.8 C866.9 1151.7 872.2 1149.8 877.5 1149.0 C881.4 1148.5 885.4 1147.9 889.4 1147.9 C894.7 1147.9 899.9 1148.6 905.2 1148.7 C927.7 1148.9 950.2 1148.8 972.7 1149.0 C980.6 1149.2 988.6 1151.8 996.5 1151.8 C1070.6 1151.8 1144.7 1151.8 1218.7 1151.8 C1221.4 1151.8 1224.0 1156.7 1226.7 1161.7 C1229.3 1166.8 1232.0 1181.7 1234.6 1193.5 C1237.0 1204.1 1239.4 1220.1 1241.7 1229.2 C1243.3 1235.3 1244.9 1244.3 1246.5 1244.3 C1248.5 1244.3 1250.5 1239.8 1252.5 1235.2 C1254.4 1230.5 1256.4 1215.5 1258.4 1205.4 C1261.1 1191.9 1263.7 1172.4 1266.3 1163.7 C1267.9 1158.5 1269.5 1151.8 1271.1 1151.8 C1290.4 1151.8 1309.7 1151.8 1329.0 1151.8 C1330.5 1151.8 1332.0 1134.7 1333.5 1122.0 C1337.5 1087.7 1341.5 1024.9 1345.5 955.0 C1347.3 923.0 1349.2 867.1 1351.0 835.0 C1351.8 820.4 1352.7 801.3 1353.5 797.0 C1354.7 790.9 1355.8 786.5 1357.0 786.5 C1393.3 786.0 1429.7 786.2 1466.0 786.0" stroke="#5cb85c" stroke-width="3"/></svg>
<div class="b" style="left:1531px;top:538px;width:931px;height:798px;background:#fff;border:1.5px solid #e6e8e8;border-radius:6px;box-sizing:border-box;overflow:hidden;"></div>
<div class="b" style="left:1531px;top:538px;width:931px;height:65px;background:#e9ebea;border-radius:6px 6px 0 0;"></div>
<div class="t" style="left:1561.0px;top:558.3px;font-size:27.2px;color:#262626;letter-spacing:-0.06px;">Compliance Coverage</div>
<svg class="b" style="left:0;top:0" width="2516" height="1573"><circle cx="1997" cy="952.5" r="332.5" fill="#d0d0d0"/><path d="M1997.00 621.00 A331.5 331.5 0 0 1 2122.25 645.57 L2086.17 733.99 A236 236 0 0 0 1997.00 716.50 Z" fill="#cd615c" stroke="#e6e6e6" stroke-width="2" stroke-linejoin="round"/><path d="M2122.25 645.57 A331.5 331.5 0 0 1 2321.73 1019.16 L2228.18 999.95 A236 236 0 0 0 2086.17 733.99 Z" fill="#59b357" stroke="#e6e6e6" stroke-width="2" stroke-linejoin="round"/><path d="M2321.73 1019.16 A331.5 331.5 0 0 1 2294.95 1097.82 L2209.12 1055.96 A236 236 0 0 0 2228.18 999.95 Z" fill="#cd615c" stroke="#e6e6e6" stroke-width="2" stroke-linejoin="round"/><path d="M2294.95 1097.82 A331.5 331.5 0 0 1 1854.29 1251.71 L1895.40 1165.51 A236 236 0 0 0 2209.12 1055.96 Z" fill="#91d88e" stroke="#e6e6e6" stroke-width="2" stroke-linejoin="round"/><path d="M1854.29 1251.71 A331.5 331.5 0 0 1 1844.44 1246.81 L1888.39 1162.02 A236 236 0 0 0 1895.40 1165.51 Z" fill="#cd615c" stroke="#e6e6e6" stroke-width="2" stroke-linejoin="round"/><path d="M1844.44 1246.81 A331.5 331.5 0 0 1 1822.81 1234.54 L1872.99 1153.29 A236 236 0 0 0 1888.39 1162.02 Z" fill="#59b357" stroke="#e6e6e6" stroke-width="2" stroke-linejoin="round"/><path d="M1822.81 1234.54 A331.5 331.5 0 0 1 1814.03 1228.93 L1866.74 1149.30 A236 236 0 0 0 1872.99 1153.29 Z" fill="#cd615c" stroke="#e6e6e6" stroke-width="2" stroke-linejoin="round"/><path d="M1814.03 1228.93 A331.5 331.5 0 0 1 1794.28 1214.79 L1852.68 1139.23 A236 236 0 0 0 1866.74 1149.30 Z" fill="#59b357" stroke="#e6e6e6" stroke-width="2" stroke-linejoin="round"/><path d="M1794.28 1214.79 A331.5 331.5 0 0 1 1785.25 1207.56 L1846.25 1134.08 A236 236 0 0 0 1852.68 1139.23 Z" fill="#cd615c" stroke="#e6e6e6" stroke-width="2" stroke-linejoin="round"/><path d="M1785.25 1207.56 A331.5 331.5 0 0 1 1767.97 1192.16 L1833.95 1123.12 A236 236 0 0 0 1846.25 1134.08 Z" fill="#59b357" stroke="#e6e6e6" stroke-width="2" stroke-linejoin="round"/><path d="M1767.97 1192.16 A331.5 331.5 0 0 1 1760.15 1184.44 L1828.38 1117.62 A236 236 0 0 0 1833.95 1123.12 Z" fill="#59b357" stroke="#e6e6e6" stroke-width="2" stroke-linejoin="round"/><path d="M1760.15 1184.44 A331.5 331.5 0 0 1 1751.42 1175.18 L1822.17 1111.03 A236 236 0 0 0 1828.38 1117.62 Z" fill="#cd615c" stroke="#e6e6e6" stroke-width="2" stroke-linejoin="round"/><path d="M1751.42 1175.18 A331.5 331.5 0 0 1 1743.43 1166.03 L1816.48 1104.51 A236 236 0 0 0 1822.17 1111.03 Z" fill="#cd615c" stroke="#e6e6e6" stroke-width="2" stroke-linejoin="round"/><path d="M1743.43 1166.03 A331.5 331.5 0 0 1 1665.82 938.04 L1761.22 942.21 A236 236 0 0 0 1816.48 1104.51 Z" fill="#59b357" stroke="#e6e6e6" stroke-width="2" stroke-linejoin="round"/><path d="M1665.82 938.04 A331.5 331.5 0 0 1 1666.71 924.18 L1761.86 932.34 A236 236 0 0 0 1761.22 942.21 Z" fill="#59b357" stroke="#e6e6e6" stroke-width="2" stroke-linejoin="round"/><path d="M1666.71 924.18 A331.5 331.5 0 0 1 1771.77 709.27 L1836.65 779.34 A236 236 0 0 0 1761.86 932.34 Z" fill="#59b357" stroke="#e6e6e6" stroke-width="2" stroke-linejoin="round"/><path d="M1771.77 709.27 A331.5 331.5 0 0 1 1997.00 621.00 L1997.00 716.50 A236 236 0 0 0 1836.65 779.34 Z" fill="#59b357" stroke="#e6e6e6" stroke-width="2" stroke-linejoin="round"/><path d="M1997.00 716.50 A236 236 0 0 1 2228.18 999.95 L2183.12 990.70 A190 190 0 0 0 1997.00 762.50 Z" fill="#4f9d8b" stroke="#e6e6e6" stroke-width="2" stroke-linejoin="round"/><path d="M2228.18 999.95 A236 236 0 0 1 1895.40 1165.51 L1915.20 1123.99 A190 190 0 0 0 2183.12 990.70 Z" fill="#4f9d8b" stroke="#e6e6e6" stroke-width="2" stroke-linejoin="round"/><path d="M1895.40 1165.51 A236 236 0 0 1 1872.99 1153.29 L1897.16 1114.15 A190 190 0 0 0 1915.20 1123.99 Z" fill="#4f9d8b" stroke="#e6e6e6" stroke-width="2" stroke-linejoin="round"/><path d="M1872.99 1153.29 A236 236 0 0 1 1852.68 1139.23 L1880.81 1102.83 A190 190 0 0 0 1897.16 1114.15 Z" fill="#4f9d8b" stroke="#e6e6e6" stroke-width="2" stroke-linejoin="round"/><path d="M1852.68 1139.23 A236 236 0 0 1 1833.95 1123.12 L1865.73 1089.86 A190 190 0 0 0 1880.81 1102.83 Z" fill="#4f9d8b" stroke="#e6e6e6" stroke-width="2" stroke-linejoin="round"/><path d="M1833.95 1123.12 A236 236 0 0 1 1828.38 1117.62 L1861.25 1085.44 A190 190 0 0 0 1865.73 1089.86 Z" fill="#6c7be8" stroke="#e6e6e6" stroke-width="2" stroke-linejoin="round"/><path d="M1828.38 1117.62 A236 236 0 0 1 1822.72 1111.64 L1856.69 1080.62 A190 190 0 0 0 1861.25 1085.44 Z" fill="#6c7be8" stroke="#e6e6e6" stroke-width="2" stroke-linejoin="round"/><path d="M1822.72 1111.64 A236 236 0 0 1 1816.48 1104.51 L1851.66 1074.88 A190 190 0 0 0 1856.69 1080.62 Z" fill="#6c7be8" stroke="#e6e6e6" stroke-width="2" stroke-linejoin="round"/><path d="M1816.48 1104.51 A236 236 0 0 1 1761.22 942.21 L1807.18 944.21 A190 190 0 0 0 1851.66 1074.88 Z" fill="#9ed3e0" stroke="#e6e6e6" stroke-width="2" stroke-linejoin="round"/><path d="M1761.22 942.21 A236 236 0 0 1 1761.86 932.34 L1807.69 936.27 A190 190 0 0 0 1807.18 944.21 Z" fill="#a7e5d1" stroke="#e6e6e6" stroke-width="2" stroke-linejoin="round"/><path d="M1761.86 932.34 A236 236 0 0 1 1836.65 779.34 L1867.91 813.09 A190 190 0 0 0 1807.69 936.27 Z" fill="#224b79" stroke="#e6e6e6" stroke-width="2" stroke-linejoin="round"/><path d="M1836.65 779.34 A236 236 0 0 1 1997.00 716.50 L1997.00 762.50 A190 190 0 0 0 1867.91 813.09 Z" fill="#224b79" stroke="#e6e6e6" stroke-width="2" stroke-linejoin="round"/><path d="M1997.00 762.50 A190 190 0 1 1 1865.73 1089.86 L1931.37 1021.18 A95 95 0 1 0 1997.00 857.50 Z" fill="#4f9d8b" stroke="#e6e6e6" stroke-width="2" stroke-linejoin="round"/><path d="M1865.73 1089.86 A190 190 0 0 1 1851.66 1074.88 L1924.33 1013.69 A95 95 0 0 0 1931.37 1021.18 Z" fill="#6c7be8" stroke="#e6e6e6" stroke-width="2" stroke-linejoin="round"/><path d="M1851.66 1074.88 A190 190 0 0 1 1807.18 944.21 L1902.09 948.36 A95 95 0 0 0 1924.33 1013.69 Z" fill="#9ed3e0" stroke="#e6e6e6" stroke-width="2" stroke-linejoin="round"/><path d="M1807.18 944.21 A190 190 0 0 1 1807.69 936.27 L1902.35 944.39 A95 95 0 0 0 1902.09 948.36 Z" fill="#a7e5d1" stroke="#e6e6e6" stroke-width="2" stroke-linejoin="round"/><path d="M1807.69 936.27 A190 190 0 0 1 1997.00 762.50 L1997.00 857.50 A95 95 0 0 0 1902.35 944.39 Z" fill="#224b79" stroke="#e6e6e6" stroke-width="2" stroke-linejoin="round"/><circle cx="1997" cy="952.5" r="95" fill="#fff" stroke="#e6e6e6" stroke-width="2"/></svg>
<div class="t" style="left:1964.1px;top:934.8px;font-size:20.2px;color:#000;font-weight:bold;">CIS v...</div>
<div class="t" style="left:1821.3px;top:835.2px;font-size:20px;font-weight:bold;color:#fff;transform:rotate(-42.5deg);transform-origin:79.3px 10.1px;">Virtual Machines</div>
<div class="t" style="left:2024.6px;top:993.2px;font-size:20px;font-weight:bold;color:#fff;transform:rotate(-68.2deg);transform-origin:104.7px 10.1px;">Identity and Access ...</div>
<div class="t" style="left:1823.8px;top:986.1px;font-size:20px;font-weight:bold;color:#000;transform:rotate(-18.8deg);transform-origin:38.3px 10.1px;">Netwo...</div>
<div class="t" style="left:1905.0px;top:740.9px;font-size:20px;font-weight:bold;color:#fff;transform:rotate(-21.4deg);transform-origin:13.9px 10.1px;">4.3</div>
<div class="t" style="left:1790.8px;top:846.2px;font-size:20px;font-weight:bold;color:#fff;transform:rotate(-64.0deg);transform-origin:13.9px 10.1px;">4.4</div>
<div class="t" style="left:2148.9px;top:804.9px;font-size:20px;font-weight:bold;color:#fff;transform:rotate(50.8deg);transform-origin:13.9px 10.1px;">1.4</div>
<div class="t" style="left:1780.5px;top:1009.1px;font-size:20px;font-weight:bold;color:#000;transform:rotate(71.2deg);transform-origin:13.9px 10.1px;">3.2</div>
<div class="t" style="left:2072.9px;top:1131.7px;font-size:20px;font-weight:bold;color:#fff;transform:rotate(-26.4deg);transform-origin:19.5px 10.1px;">1.16</div>
<div class="t" style="left:1869.8px;top:675.2px;font-size:20px;font-weight:bold;color:#fff;transform:rotate(-21.4deg);transform-origin:23.4px 10.1px;">Pass</div>
<div class="t" style="left:2034.6px;top:660.9px;font-size:20px;font-weight:bold;color:#fff;transform:rotate(-78.9deg);transform-origin:17.2px 10.1px;">Fail</div>
<div class="t" style="left:2224.7px;top:806.1px;font-size:20px;font-weight:bold;color:#fff;transform:rotate(61.9deg);transform-origin:23.4px 10.1px;">Pass</div>
<div class="t" style="left:2249.2px;top:1031.9px;font-size:20px;font-weight:bold;color:#fff;transform:rotate(18.8deg);transform-origin:17.2px 10.1px;">Fail</div>
<div class="t" style="left:2067.5px;top:1208.8px;font-size:20px;font-weight:bold;color:#fff;transform:rotate(-19.2deg);transform-origin:23.4px 10.1px;">Pass</div>
<div class="t" style="left:1704.2px;top:1031.9px;font-size:20px;font-weight:bold;color:#fff;transform:rotate(71.2deg);transform-origin:23.4px 10.1px;">Pass</div>
<div class="t" style="left:1718.0px;top:815.2px;font-size:20px;font-weight:bold;color:#fff;transform:rotate(-64.0deg);transform-origin:23.4px 10.1px;">Pass</div>
<svg class="b" style="left:2030px;top:1138px" width="130" height="80"><path d="M10 5.6 L117 5.6 Q120 5.6 120 8.6 L120 54.2 Q120 57.2 117 57.2 L70.5 57.2 L60.7 69.6 L50.9 57.2 L10 57.2 Q7 57.2 7 54.2 L7 8.6 Q7 5.6 10 5.6 Z" fill="rgba(247,247,247,0.88)" stroke="#5cb85c" stroke-width="2" style="filter:drop-shadow(1px 2px 1.5px rgba(0,0,0,0.3))"/></svg>
<div class="t" style="left:2050px;top:1160.2px;font-size:21.5px;color:#333;"><b>Pass:</b> 44</div>
<div class="b" style="left:1898px;top:1387px;width:76px;height:39px;border-radius:19.5px;background:#b9b9b9;"></div>
<div class="b" style="left:1901px;top:1390.5px;width:32.5px;height:32.5px;border-radius:50%;background:#fff;box-shadow:-1px 1px 3px rgba(0,0,0,0.35);"></div>
<div class="t" style="left:1941.5px;top:1395.5px;font-size:21.840000000000003px;color:#fff;font-weight:bold;">%</div>
<div class="b" style="left:2001.5px;top:1386px;width:303.5px;height:51px;background:#fff;border:2px solid #dedede;border-radius:7px;box-sizing:border-box;"></div>
<div class="t" style="left:2022.0px;top:1402.2px;font-size:19.5px;color:#b5b5b5;letter-spacing:-1.46px;">Search</div>
<svg class="b" style="left:2265px;top:1399px" width="26" height="26"><circle cx="10.5" cy="10.5" r="5.6" stroke="#8a8a8a" stroke-width="1.6" fill="none"/><path d="M14.5 14.5 L21.0 21.0" stroke="#8a8a8a" stroke-width="2.0" stroke-linecap="round"/></svg>
<div class="b" style="left:2333px;top:1386px;width:51.5px;height:51.5px;border:1.6px solid #808080;border-radius:7px;box-sizing:border-box;"></div>
<svg class="b" style="left:2333px;top:1386px" width="52" height="52"><path d="M23.5 13 L28.5 13 L28.5 23.5 L33.5 23.5 L26 31.5 L18.5 23.5 L23.5 23.5 Z" fill="#2b2b2b"/><path d="M13 30.5 L20.5 30.5 L26 35.5 L31.5 30.5 L38.5 30.5 L38.5 38.5 L13 38.5 Z" fill="#2b2b2b"/><circle cx="31.5" cy="35.5" r="0.9" fill="#fff"/><circle cx="34.5" cy="35.5" r="0.9" fill="#fff"/></svg>
<div class="b" style="left:2411px;top:1386px;width:52px;height:51.5px;background:#fff;border:1.6px solid #808080;border-radius:7px;box-sizing:border-box;"></div>
<svg class="b" style="left:2411px;top:1386px" width="52" height="52"><g fill="#2b2b2b"><rect x="16" y="18.5" width="8" height="2.2"/><rect x="26" y="18.5" width="10.8" height="2.2"/><rect x="16" y="23" width="8" height="2.2"/><rect x="26" y="23" width="10.8" height="2.2"/><rect x="16" y="27.5" width="8" height="2.2"/><rect x="26" y="27.5" width="10.8" height="2.2"/><rect x="16" y="33" width="8" height="2.2"/><rect x="26" y="33" width="10.8" height="2.2"/></g></svg>
<div class="b" style="left:571px;top:1464px;width:1892px;height:116px;background:#fff;border:2px solid #c6ccd1;box-sizing:border-box;"></div>
<div class="b" style="left:573px;top:1520.5px;width:1888px;height:59.5px;background:#f9f9f9;border-top:2px solid #c6ccd1;box-sizing:border-box;"></div>
<div class="b" style="left:982px;top:1466px;width:2px;height:107px;background:#dfe2e5;"></div>
<div class="t" style="left:593.0px;top:1484.8px;font-size:20.2px;color:#2d2d2d;font-weight:bold;letter-spacing:-0.03px;">REQUIREMENT</div>
<div class="t" style="left:1005.0px;top:1484.8px;font-size:20.2px;color:#2d2d2d;font-weight:bold;letter-spacing:-0.20px;">DESCRIPTION</div>
<svg class="b" style="left:751px;top:1482.5px" width="26" height="24"><path d="M6 4 L6 19 M1.5 14.5 L6 19 L10.5 14.5 M19 20 L19 5 M14.5 9.5 L19 5 L23.5 9.5" stroke="#777" stroke-width="1.6" fill="none"/></svg>
<svg class="b" style="left:1151px;top:1482.5px" width="26" height="24"><path d="M6 4 L6 19 M1.5 14.5 L6 19 L10.5 14.5 M19 20 L19 5 M14.5 9.5 L19 5 L23.5 9.5" stroke="#777" stroke-width="1.6" fill="none"/></svg>
<svg class="b" style="left:938px;top:1484px" width="22" height="22"><path d="M2 3.5 L19.5 3.5 M2 10 L19.5 10 M2 16.5 L19.5 16.5" stroke="#666" stroke-width="1.6"/></svg>
<div class="t" style="left:591.5px;top:1535.2px;font-size:20.45px;color:#2a6fca;letter-spacing:0.00px;">Identity and Access Management</div>
<svg class="b" style="left:904px;top:1534px" width="24" height="24"><path d="M9 3.5 L4 3.5 Q2.5 3.5 2.5 5 L2.5 18.5 Q2.5 20 4 20 L17.5 20 Q19 20 19 18.5 L19 13.5" stroke="#2b2b2b" stroke-width="2" fill="none"/><path d="M13 2.5 L20 2.5 L20 9.5 M20 2.5 L10.5 12" stroke="#2b2b2b" stroke-width="2" fill="none"/></svg>
<div class="t" style="left:1003.6px;top:1535.2px;font-size:20.45px;color:#2d2d2d;letter-spacing:0.01px;">This section contains recommendations for configuring identity and access management related options.</div>
<div class="b" style="left:2490px;top:0px;width:26px;height:1573px;background:#f1f1f1;border-left:1.5px solid #e2e2e2;box-sizing:border-box;"></div>
<div class="b" style="left:2496px;top:5px;width:14px;height:717px;background:#c1c1c1;border-radius:7px;"></div>
<div class="b" style="left:2376.8px;top:1448.9px;width:53.6px;height:53.6px;border-radius:50%;background:#3781b5;box-shadow:0 0 0 3px #71a5cc inset;"></div>
<div class="b" style="left:2400.5px;top:1456.7px;width:98px;height:98px;border-radius:50%;background:#3781b5;box-shadow:0 2px 8px rgba(0,0,0,0.18);"></div>
<div class="b" style="left:2376.8px;top:1448.9px;width:53.6px;height:53.6px;border-radius:50%;background:#3781b5;clip-path:circle(24px at 26.8px 26.8px);"></div>
<div class="t" style="left:2396.8px;top:1462.9px;font-size:26px;color:#fff;">6</div>
<svg class="b" style="left:2420px;top:1475px" width="60" height="64"><path d="M17.5 16 Q18 7.5 29.5 7.5 Q41.5 7.5 41.5 17.5 Q41.5 24 34 28.5 Q29.5 31.5 29.5 37" stroke="#fff" stroke-width="9" fill="none" stroke-linecap="round"/><circle cx="29.5" cy="52" r="5.8" fill="#fff"/></svg>
<div class="b" style="left:97.6px;top:5px;width:28px;height:28px;border-radius:50%;background:linear-gradient(90deg,#6aa8ee,#4a8fe3);"></div>
<svg class="b" style="left:97.6px;top:5px" width="28" height="28"><path d="M11.3 7.8 L17.2 14 L11.3 20.2" stroke="#fff" stroke-width="1.6" fill="none"/></svg>
<div class="b" style="left:42px;top:688px;width:63px;height:24.5px;border-radius:12.5px;background:#c8453c;"></div>
<div class="t" style="left:48.2px;top:691.2px;font-size:18.5px;color:#fff;letter-spacing:-0.36px;">9999+</div>
<div class="b" style="left:36.7px;top:1256.4px;width:40.2px;height:27.5px;border-radius:50%;background:rgba(214,52,44,0.92);"></div>
<div class="t" style="left:41.8px;top:1260.9px;font-size:19px;color:#fff;font-weight:bold;letter-spacing:-0.60px;">108</div>
<div class="b" style="left:59.3px;top:1319px;width:62.7px;height:38.6px;border-radius:8px;background:linear-gradient(135deg,#2d70c6,#1d54a3);"></div>
<div class="t" style="left:73.2px;top:1327.4px;font-size:22px;color:#fff;letter-spacing:-1.11px;">Trial</div>
<div class="b" style="left:114px;top:1571px;width:2402px;height:2px;background:#d9dcde;"></div>
</body></html>
